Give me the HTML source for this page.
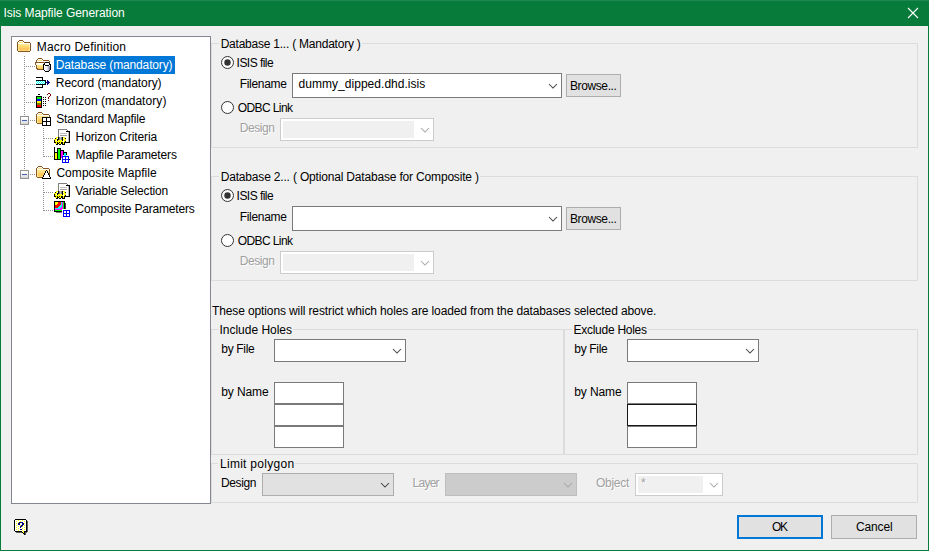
<!DOCTYPE html>
<html><head><meta charset="utf-8"><title>Isis Mapfile Generation</title>
<style>
html,body{margin:0;padding:0;background:#f0f0f0;}
body{width:929px;height:551px;overflow:hidden;font-family:"Liberation Sans",sans-serif;font-size:12px;color:#000;}
#win{position:absolute;left:0;top:0;width:929px;height:551px;background:#f0f0f0;overflow:hidden;}
#win *{box-sizing:border-box;}
.abs,.t,.gb,.cb,.btn,.tb,.rad,svg{position:absolute;}
.t{white-space:pre;line-height:14px;height:14px;font-size:12px;color:#000;}
.t.w{color:#fff;}
.t.d{color:#a0a0a0;text-shadow:1px 1px 0 #fff;}
.t.gl{background:#f0f0f0;padding:0 1px 0 2px;}
.title{left:0;top:0;width:929px;height:26px;background:#077b39;}
.edge{background:#077b39;}
.tree{left:11px;top:36px;width:200px;height:468px;background:#fff;border:1px solid #828790;}
.sel{left:54px;top:56px;width:121px;height:18px;background:#0078d7;}
.gb{border:1px solid #dcdcdc;}
.cb{background:#fff;border:1px solid #7a7a7a;}
.cb.dis{border-color:#cccccc;}
.cb.dis i{position:absolute;background:#f0f0f0;}
.cb.g{background:#e1e1e1;border-color:#adadad;}
.cb.gd{background:#cccccc;border-color:#bfbfbf;}
.btn{background:#e1e1e1;border:1px solid #adadad;}
.btn.def{border:2px solid #0078d7;}
.tb{background:#fff;border:1px solid #7a7a7a;}
.tb.f{border-color:#171717;}
.rad{width:13px;height:13px;}

</style></head>
<body>
<div id="win">
<div class="abs title"></div>
<div class="abs" style="left:0;top:0;width:929px;height:1px;background:#1f8850"></div>
<div class="abs edge" style="left:0;top:26px;width:1px;height:525px"></div>
<div class="abs edge" style="left:928px;top:26px;width:1px;height:525px"></div>
<div class="abs edge" style="left:0;top:550px;width:929px;height:1px"></div>
<svg style="left:907px;top:7px" width="12" height="12" viewBox="0 0 12 12"><path d="M1 1 L11 11 M11 1 L1 11" stroke="#fff" stroke-width="1.1" fill="none"/></svg>
<div class="abs tree"></div>
<div class="abs sel"></div>
<svg style="left:24px;top:56px" width="1" height="115" viewBox="0 0 1 115" shape-rendering="crispEdges"><path d="M0.5 0 V115" stroke="#919191" stroke-width="1" stroke-dasharray="1 1" fill="none"/></svg>
<svg style="left:26px;top:66px" width="9" height="1" viewBox="0 0 9 1" shape-rendering="crispEdges"><path d="M0 0.5 H9" stroke="#919191" stroke-width="1" stroke-dasharray="1 1" fill="none"/></svg>
<svg style="left:26px;top:84px" width="9" height="1" viewBox="0 0 9 1" shape-rendering="crispEdges"><path d="M0 0.5 H9" stroke="#919191" stroke-width="1" stroke-dasharray="1 1" fill="none"/></svg>
<svg style="left:26px;top:102px" width="9" height="1" viewBox="0 0 9 1" shape-rendering="crispEdges"><path d="M0 0.5 H9" stroke="#919191" stroke-width="1" stroke-dasharray="1 1" fill="none"/></svg>
<svg style="left:30px;top:120px" width="5" height="1" viewBox="0 0 5 1" shape-rendering="crispEdges"><path d="M0 0.5 H5" stroke="#919191" stroke-width="1" stroke-dasharray="1 1" fill="none"/></svg>
<svg style="left:30px;top:174px" width="5" height="1" viewBox="0 0 5 1" shape-rendering="crispEdges"><path d="M0 0.5 H5" stroke="#919191" stroke-width="1" stroke-dasharray="1 1" fill="none"/></svg>
<svg style="left:43px;top:128px" width="1" height="29" viewBox="0 0 1 29" shape-rendering="crispEdges"><path d="M0.5 0 V29" stroke="#919191" stroke-width="1" stroke-dasharray="1 1" fill="none"/></svg>
<svg style="left:43px;top:182px" width="1" height="29" viewBox="0 0 1 29" shape-rendering="crispEdges"><path d="M0.5 0 V29" stroke="#919191" stroke-width="1" stroke-dasharray="1 1" fill="none"/></svg>
<svg style="left:44px;top:138px" width="9" height="1" viewBox="0 0 9 1" shape-rendering="crispEdges"><path d="M0 0.5 H9" stroke="#919191" stroke-width="1" stroke-dasharray="1 1" fill="none"/></svg>
<svg style="left:44px;top:156px" width="9" height="1" viewBox="0 0 9 1" shape-rendering="crispEdges"><path d="M0 0.5 H9" stroke="#919191" stroke-width="1" stroke-dasharray="1 1" fill="none"/></svg>
<svg style="left:44px;top:192px" width="9" height="1" viewBox="0 0 9 1" shape-rendering="crispEdges"><path d="M0 0.5 H9" stroke="#919191" stroke-width="1" stroke-dasharray="1 1" fill="none"/></svg>
<svg style="left:44px;top:210px" width="9" height="1" viewBox="0 0 9 1" shape-rendering="crispEdges"><path d="M0 0.5 H9" stroke="#919191" stroke-width="1" stroke-dasharray="1 1" fill="none"/></svg>
<svg style="left:17px;top:40px" width="14" height="12" viewBox="0 0 14 12" shape-rendering="crispEdges"><rect x="2" y="0" width="4" height="1" fill="#8a5522"/><rect x="1" y="1" width="1" height="1" fill="#8a5522"/><rect x="2" y="1" width="4" height="1" fill="#fffdf0"/><rect x="6" y="1" width="1" height="1" fill="#8a5522"/><rect x="0" y="2" width="1" height="1" fill="#8a5522"/><rect x="1" y="2" width="1" height="1" fill="#fffdf0"/><rect x="2" y="2" width="4" height="1" fill="#ffe27a"/><rect x="6" y="2" width="1" height="1" fill="#fffdf0"/><rect x="7" y="2" width="6" height="1" fill="#8a5522"/><rect x="0" y="3" width="1" height="1" fill="#8a5522"/><rect x="1" y="3" width="12" height="1" fill="#fffdf0"/><rect x="13" y="3" width="1" height="1" fill="#8a5522"/><rect x="0" y="4" width="1" height="1" fill="#8a5522"/><rect x="1" y="4" width="1" height="1" fill="#ffe890"/><rect x="2" y="4" width="10" height="1" fill="#ffe68c"/><rect x="12" y="4" width="1" height="1" fill="#fffdf0"/><rect x="13" y="4" width="1" height="1" fill="#8a5522"/><rect x="0" y="5" width="1" height="1" fill="#8a5522"/><rect x="1" y="5" width="1" height="1" fill="#ffe890"/><rect x="2" y="5" width="10" height="1" fill="#ffdf7e"/><rect x="12" y="5" width="1" height="1" fill="#fff6d0"/><rect x="13" y="5" width="1" height="1" fill="#8a5522"/><rect x="0" y="6" width="1" height="1" fill="#8a5522"/><rect x="1" y="6" width="1" height="1" fill="#ffe890"/><rect x="2" y="6" width="10" height="1" fill="#ffd870"/><rect x="12" y="6" width="1" height="1" fill="#ffe890"/><rect x="13" y="6" width="1" height="1" fill="#8a5522"/><rect x="0" y="7" width="1" height="1" fill="#8a5522"/><rect x="1" y="7" width="1" height="1" fill="#ffe890"/><rect x="2" y="7" width="10" height="1" fill="#ffd168"/><rect x="12" y="7" width="1" height="1" fill="#ffe890"/><rect x="13" y="7" width="1" height="1" fill="#8a5522"/><rect x="0" y="8" width="1" height="1" fill="#8a5522"/><rect x="1" y="8" width="1" height="1" fill="#ffe890"/><rect x="2" y="8" width="10" height="1" fill="#fdc95e"/><rect x="12" y="8" width="1" height="1" fill="#ffe890"/><rect x="13" y="8" width="1" height="1" fill="#8a5522"/><rect x="0" y="9" width="1" height="1" fill="#8a5522"/><rect x="1" y="9" width="1" height="1" fill="#ffe890"/><rect x="2" y="9" width="10" height="1" fill="#fcc85c"/><rect x="12" y="9" width="1" height="1" fill="#ffe890"/><rect x="13" y="9" width="1" height="1" fill="#8a5522"/><rect x="0" y="10" width="1" height="1" fill="#8a5522"/><rect x="1" y="10" width="2" height="1" fill="#ffe890"/><rect x="3" y="10" width="8" height="1" fill="#ffd470"/><rect x="11" y="10" width="2" height="1" fill="#ffe890"/><rect x="13" y="10" width="1" height="1" fill="#8a5522"/><rect x="1" y="11" width="12" height="1" fill="#8a5522"/></svg>
<svg style="left:35px;top:58px" width="16" height="14" viewBox="0 0 16 14" shape-rendering="crispEdges"><rect x="3" y="0" width="4" height="1" fill="#8a5522"/><rect x="2" y="1" width="1" height="1" fill="#8a5522"/><rect x="3" y="1" width="4" height="1" fill="#fffdf0"/><rect x="7" y="1" width="1" height="1" fill="#8a5522"/><rect x="1" y="2" width="1" height="1" fill="#8a5522"/><rect x="2" y="2" width="1" height="1" fill="#fffdf0"/><rect x="3" y="2" width="4" height="1" fill="#ffe27a"/><rect x="7" y="2" width="1" height="1" fill="#fffdf0"/><rect x="8" y="2" width="6" height="1" fill="#8a5522"/><rect x="1" y="3" width="1" height="1" fill="#8a5522"/><rect x="2" y="3" width="12" height="1" fill="#fffdf0"/><rect x="14" y="3" width="1" height="1" fill="#8a5522"/><rect x="0" y="4" width="9" height="1" fill="#8a5522"/><rect x="9" y="4" width="1" height="1" fill="#b07a3c"/><rect x="10" y="4" width="4" height="1" fill="#000000"/><rect x="14" y="4" width="1" height="1" fill="#8a5522"/><rect x="0" y="5" width="1" height="1" fill="#8a5522"/><rect x="1" y="5" width="8" height="1" fill="#fffdf0"/><rect x="9" y="5" width="1" height="1" fill="#000000"/><rect x="10" y="5" width="4" height="1" fill="#ffffff"/><rect x="14" y="5" width="1" height="1" fill="#000000"/><rect x="0" y="6" width="1" height="1" fill="#8a5522"/><rect x="1" y="6" width="7" height="1" fill="#fffdf0"/><rect x="8" y="6" width="2" height="1" fill="#000000"/><rect x="10" y="6" width="4" height="1" fill="#ffffff"/><rect x="14" y="6" width="2" height="1" fill="#000000"/><rect x="1" y="7" width="1" height="1" fill="#8a5522"/><rect x="2" y="7" width="1" height="1" fill="#ffe27a"/><rect x="3" y="7" width="5" height="1" fill="#ffe68c"/><rect x="8" y="7" width="1" height="1" fill="#000000"/><rect x="9" y="7" width="1" height="1" fill="#ffffff"/><rect x="10" y="7" width="4" height="1" fill="#000000"/><rect x="14" y="7" width="1" height="1" fill="#ffffff"/><rect x="15" y="7" width="1" height="1" fill="#000000"/><rect x="1" y="8" width="1" height="1" fill="#8a5522"/><rect x="2" y="8" width="1" height="1" fill="#ffe890"/><rect x="3" y="8" width="5" height="1" fill="#ffdf7e"/><rect x="8" y="8" width="1" height="1" fill="#000000"/><rect x="9" y="8" width="1" height="1" fill="#ffffff"/><rect x="10" y="8" width="2" height="1" fill="#f4f4fa"/><rect x="12" y="8" width="1" height="1" fill="#d8d8e4"/><rect x="13" y="8" width="1" height="1" fill="#b4b4c6"/><rect x="14" y="8" width="1" height="1" fill="#8c8c98"/><rect x="15" y="8" width="1" height="1" fill="#000000"/><rect x="1" y="9" width="1" height="1" fill="#8a5522"/><rect x="2" y="9" width="1" height="1" fill="#ffe890"/><rect x="3" y="9" width="5" height="1" fill="#ffd168"/><rect x="8" y="9" width="1" height="1" fill="#000000"/><rect x="9" y="9" width="1" height="1" fill="#ffffff"/><rect x="10" y="9" width="2" height="1" fill="#f4f4fa"/><rect x="12" y="9" width="1" height="1" fill="#d8d8e4"/><rect x="13" y="9" width="1" height="1" fill="#b4b4c6"/><rect x="14" y="9" width="1" height="1" fill="#8c8c98"/><rect x="15" y="9" width="1" height="1" fill="#000000"/><rect x="1" y="10" width="2" height="1" fill="#8a5522"/><rect x="3" y="10" width="5" height="1" fill="#fdc95e"/><rect x="8" y="10" width="1" height="1" fill="#000000"/><rect x="9" y="10" width="1" height="1" fill="#ffffff"/><rect x="10" y="10" width="2" height="1" fill="#f4f4fa"/><rect x="12" y="10" width="1" height="1" fill="#d8d8e4"/><rect x="13" y="10" width="1" height="1" fill="#b4b4c6"/><rect x="14" y="10" width="1" height="1" fill="#8c8c98"/><rect x="15" y="10" width="1" height="1" fill="#000000"/><rect x="2" y="11" width="6" height="1" fill="#8a5522"/><rect x="8" y="11" width="1" height="1" fill="#000000"/><rect x="9" y="11" width="1" height="1" fill="#ffffff"/><rect x="10" y="11" width="2" height="1" fill="#f4f4fa"/><rect x="12" y="11" width="1" height="1" fill="#d8d8e4"/><rect x="13" y="11" width="1" height="1" fill="#b4b4c6"/><rect x="14" y="11" width="1" height="1" fill="#8c8c98"/><rect x="15" y="11" width="1" height="1" fill="#000000"/><rect x="9" y="12" width="1" height="1" fill="#000000"/><rect x="10" y="12" width="1" height="1" fill="#ffffff"/><rect x="11" y="12" width="1" height="1" fill="#f4f4fa"/><rect x="12" y="12" width="1" height="1" fill="#d8d8e4"/><rect x="13" y="12" width="1" height="1" fill="#b4b4c6"/><rect x="14" y="12" width="1" height="1" fill="#000000"/><rect x="10" y="13" width="4" height="1" fill="#000000"/></svg>
<svg style="left:36px;top:77px" width="14" height="11" viewBox="0 0 14 11" shape-rendering="crispEdges"><rect x="0" y="0" width="7" height="1" fill="#000000"/><rect x="6" y="1" width="1" height="1" fill="#000000"/><rect x="6" y="2" width="1" height="1" fill="#000000"/><rect x="0" y="3" width="10" height="1" fill="#000000"/><rect x="11" y="3" width="1" height="1" fill="#000080"/><rect x="0" y="4" width="1" height="1" fill="#00ffff"/><rect x="1" y="4" width="1" height="1" fill="#ffffff"/><rect x="2" y="4" width="1" height="1" fill="#00ffff"/><rect x="3" y="4" width="1" height="1" fill="#ffffff"/><rect x="4" y="4" width="1" height="1" fill="#00ffff"/><rect x="5" y="4" width="1" height="1" fill="#ffffff"/><rect x="6" y="4" width="1" height="1" fill="#00ffff"/><rect x="7" y="4" width="1" height="1" fill="#ffffff"/><rect x="8" y="4" width="1" height="1" fill="#00ffff"/><rect x="9" y="4" width="1" height="1" fill="#000000"/><rect x="11" y="4" width="2" height="1" fill="#000080"/><rect x="0" y="5" width="1" height="1" fill="#ffffff"/><rect x="1" y="5" width="1" height="1" fill="#00ffff"/><rect x="2" y="5" width="1" height="1" fill="#ffffff"/><rect x="3" y="5" width="1" height="1" fill="#00ffff"/><rect x="4" y="5" width="1" height="1" fill="#ffffff"/><rect x="5" y="5" width="1" height="1" fill="#00ffff"/><rect x="6" y="5" width="1" height="1" fill="#ffffff"/><rect x="7" y="5" width="1" height="1" fill="#00ffff"/><rect x="8" y="5" width="1" height="1" fill="#ffffff"/><rect x="9" y="5" width="1" height="1" fill="#000000"/><rect x="10" y="5" width="4" height="1" fill="#000080"/><rect x="0" y="6" width="1" height="1" fill="#00ffff"/><rect x="1" y="6" width="1" height="1" fill="#ffffff"/><rect x="2" y="6" width="1" height="1" fill="#00ffff"/><rect x="3" y="6" width="1" height="1" fill="#ffffff"/><rect x="4" y="6" width="1" height="1" fill="#00ffff"/><rect x="5" y="6" width="1" height="1" fill="#ffffff"/><rect x="6" y="6" width="1" height="1" fill="#00ffff"/><rect x="7" y="6" width="1" height="1" fill="#ffffff"/><rect x="8" y="6" width="1" height="1" fill="#00ffff"/><rect x="9" y="6" width="1" height="1" fill="#000000"/><rect x="11" y="6" width="2" height="1" fill="#000080"/><rect x="0" y="7" width="10" height="1" fill="#000000"/><rect x="11" y="7" width="1" height="1" fill="#000080"/><rect x="6" y="8" width="1" height="1" fill="#000000"/><rect x="6" y="9" width="1" height="1" fill="#000000"/><rect x="0" y="10" width="7" height="1" fill="#000000"/></svg>
<svg style="left:36px;top:93px" width="15" height="15" viewBox="0 0 15 15" shape-rendering="crispEdges"><rect x="12" y="0" width="2" height="1" fill="#800000"/><rect x="2" y="1" width="2" height="1" fill="#000000"/><rect x="11" y="1" width="1" height="1" fill="#800000"/><rect x="14" y="1" width="1" height="1" fill="#800000"/><rect x="14" y="2" width="1" height="1" fill="#800000"/><rect x="0" y="3" width="6" height="1" fill="#000000"/><rect x="13" y="3" width="1" height="1" fill="#800000"/><rect x="0" y="4" width="1" height="1" fill="#000000"/><rect x="1" y="4" width="4" height="1" fill="#00ff00"/><rect x="5" y="4" width="1" height="1" fill="#000000"/><rect x="7" y="4" width="1" height="1" fill="#000000"/><rect x="9" y="4" width="1" height="1" fill="#000000"/><rect x="12" y="4" width="1" height="1" fill="#800000"/><rect x="0" y="5" width="1" height="1" fill="#000000"/><rect x="1" y="5" width="4" height="1" fill="#00ff00"/><rect x="5" y="5" width="1" height="1" fill="#000000"/><rect x="12" y="5" width="1" height="1" fill="#800000"/><rect x="0" y="6" width="1" height="1" fill="#000000"/><rect x="1" y="6" width="4" height="1" fill="#0000ff"/><rect x="5" y="6" width="1" height="1" fill="#000000"/><rect x="7" y="6" width="1" height="1" fill="#000000"/><rect x="9" y="6" width="1" height="1" fill="#000000"/><rect x="0" y="7" width="1" height="1" fill="#000000"/><rect x="1" y="7" width="4" height="1" fill="#0000ff"/><rect x="5" y="7" width="1" height="1" fill="#000000"/><rect x="12" y="7" width="1" height="1" fill="#800000"/><rect x="0" y="8" width="1" height="1" fill="#000000"/><rect x="1" y="8" width="4" height="1" fill="#ffff00"/><rect x="5" y="8" width="1" height="1" fill="#000000"/><rect x="7" y="8" width="1" height="1" fill="#000000"/><rect x="9" y="8" width="1" height="1" fill="#000000"/><rect x="0" y="9" width="1" height="1" fill="#000000"/><rect x="1" y="9" width="4" height="1" fill="#ffff00"/><rect x="5" y="9" width="1" height="1" fill="#000000"/><rect x="0" y="10" width="1" height="1" fill="#000000"/><rect x="1" y="10" width="4" height="1" fill="#808000"/><rect x="5" y="10" width="1" height="1" fill="#000000"/><rect x="7" y="10" width="1" height="1" fill="#000000"/><rect x="9" y="10" width="1" height="1" fill="#000000"/><rect x="0" y="11" width="1" height="1" fill="#000000"/><rect x="1" y="11" width="4" height="1" fill="#808000"/><rect x="5" y="11" width="1" height="1" fill="#000000"/><rect x="0" y="12" width="1" height="1" fill="#000000"/><rect x="1" y="12" width="4" height="1" fill="#ff0000"/><rect x="5" y="12" width="1" height="1" fill="#000000"/><rect x="7" y="12" width="1" height="1" fill="#000000"/><rect x="9" y="12" width="1" height="1" fill="#000000"/><rect x="0" y="13" width="1" height="1" fill="#000000"/><rect x="1" y="13" width="4" height="1" fill="#ff0000"/><rect x="5" y="13" width="1" height="1" fill="#000000"/><rect x="0" y="14" width="6" height="1" fill="#000000"/></svg>
<svg style="left:20px;top:116px" width="9" height="9" viewBox="0 0 9 9" shape-rendering="crispEdges"><rect x="0" y="0" width="1" height="1" fill="#9a9a9a"/><rect x="1" y="0" width="7" height="1" fill="#919191"/><rect x="8" y="0" width="1" height="1" fill="#9a9a9a"/><rect x="0" y="1" width="1" height="1" fill="#919191"/><rect x="1" y="1" width="7" height="1" fill="#ffffff"/><rect x="8" y="1" width="1" height="1" fill="#919191"/><rect x="0" y="2" width="1" height="1" fill="#919191"/><rect x="1" y="2" width="7" height="1" fill="#ffffff"/><rect x="8" y="2" width="1" height="1" fill="#919191"/><rect x="0" y="3" width="1" height="1" fill="#919191"/><rect x="1" y="3" width="7" height="1" fill="#f2f2f2"/><rect x="8" y="3" width="1" height="1" fill="#919191"/><rect x="0" y="4" width="1" height="1" fill="#919191"/><rect x="1" y="4" width="1" height="1" fill="#f2f2f2"/><rect x="2" y="4" width="5" height="1" fill="#4464b8"/><rect x="7" y="4" width="1" height="1" fill="#f2f2f2"/><rect x="8" y="4" width="1" height="1" fill="#919191"/><rect x="0" y="5" width="1" height="1" fill="#919191"/><rect x="1" y="5" width="7" height="1" fill="#e4e4e4"/><rect x="8" y="5" width="1" height="1" fill="#919191"/><rect x="0" y="6" width="1" height="1" fill="#919191"/><rect x="1" y="6" width="7" height="1" fill="#e4e4e4"/><rect x="8" y="6" width="1" height="1" fill="#919191"/><rect x="0" y="7" width="1" height="1" fill="#919191"/><rect x="1" y="7" width="7" height="1" fill="#d8d8d8"/><rect x="8" y="7" width="1" height="1" fill="#919191"/><rect x="0" y="8" width="1" height="1" fill="#9a9a9a"/><rect x="1" y="8" width="7" height="1" fill="#919191"/><rect x="8" y="8" width="1" height="1" fill="#9a9a9a"/></svg>
<svg style="left:20px;top:170px" width="9" height="9" viewBox="0 0 9 9" shape-rendering="crispEdges"><rect x="0" y="0" width="1" height="1" fill="#9a9a9a"/><rect x="1" y="0" width="7" height="1" fill="#919191"/><rect x="8" y="0" width="1" height="1" fill="#9a9a9a"/><rect x="0" y="1" width="1" height="1" fill="#919191"/><rect x="1" y="1" width="7" height="1" fill="#ffffff"/><rect x="8" y="1" width="1" height="1" fill="#919191"/><rect x="0" y="2" width="1" height="1" fill="#919191"/><rect x="1" y="2" width="7" height="1" fill="#ffffff"/><rect x="8" y="2" width="1" height="1" fill="#919191"/><rect x="0" y="3" width="1" height="1" fill="#919191"/><rect x="1" y="3" width="7" height="1" fill="#f2f2f2"/><rect x="8" y="3" width="1" height="1" fill="#919191"/><rect x="0" y="4" width="1" height="1" fill="#919191"/><rect x="1" y="4" width="1" height="1" fill="#f2f2f2"/><rect x="2" y="4" width="5" height="1" fill="#4464b8"/><rect x="7" y="4" width="1" height="1" fill="#f2f2f2"/><rect x="8" y="4" width="1" height="1" fill="#919191"/><rect x="0" y="5" width="1" height="1" fill="#919191"/><rect x="1" y="5" width="7" height="1" fill="#e4e4e4"/><rect x="8" y="5" width="1" height="1" fill="#919191"/><rect x="0" y="6" width="1" height="1" fill="#919191"/><rect x="1" y="6" width="7" height="1" fill="#e4e4e4"/><rect x="8" y="6" width="1" height="1" fill="#919191"/><rect x="0" y="7" width="1" height="1" fill="#919191"/><rect x="1" y="7" width="7" height="1" fill="#d8d8d8"/><rect x="8" y="7" width="1" height="1" fill="#919191"/><rect x="0" y="8" width="1" height="1" fill="#9a9a9a"/><rect x="1" y="8" width="7" height="1" fill="#919191"/><rect x="8" y="8" width="1" height="1" fill="#9a9a9a"/></svg>
<svg style="left:36px;top:112px" width="14" height="12" viewBox="0 0 14 12" shape-rendering="crispEdges"><rect x="2" y="0" width="4" height="1" fill="#8a5522"/><rect x="1" y="1" width="1" height="1" fill="#8a5522"/><rect x="2" y="1" width="4" height="1" fill="#fffdf0"/><rect x="6" y="1" width="1" height="1" fill="#8a5522"/><rect x="0" y="2" width="1" height="1" fill="#8a5522"/><rect x="1" y="2" width="1" height="1" fill="#fffdf0"/><rect x="2" y="2" width="4" height="1" fill="#ffe27a"/><rect x="6" y="2" width="1" height="1" fill="#fffdf0"/><rect x="7" y="2" width="6" height="1" fill="#8a5522"/><rect x="0" y="3" width="1" height="1" fill="#8a5522"/><rect x="1" y="3" width="12" height="1" fill="#fffdf0"/><rect x="13" y="3" width="1" height="1" fill="#8a5522"/><rect x="0" y="4" width="1" height="1" fill="#8a5522"/><rect x="1" y="4" width="1" height="1" fill="#ffe890"/><rect x="2" y="4" width="10" height="1" fill="#ffe68c"/><rect x="12" y="4" width="1" height="1" fill="#fffdf0"/><rect x="13" y="4" width="1" height="1" fill="#8a5522"/><rect x="0" y="5" width="1" height="1" fill="#8a5522"/><rect x="1" y="5" width="1" height="1" fill="#ffe890"/><rect x="2" y="5" width="10" height="1" fill="#ffdf7e"/><rect x="12" y="5" width="1" height="1" fill="#fff6d0"/><rect x="13" y="5" width="1" height="1" fill="#8a5522"/><rect x="0" y="6" width="1" height="1" fill="#8a5522"/><rect x="1" y="6" width="1" height="1" fill="#ffe890"/><rect x="2" y="6" width="10" height="1" fill="#ffd870"/><rect x="12" y="6" width="1" height="1" fill="#ffe890"/><rect x="13" y="6" width="1" height="1" fill="#8a5522"/><rect x="0" y="7" width="1" height="1" fill="#8a5522"/><rect x="1" y="7" width="1" height="1" fill="#ffe890"/><rect x="2" y="7" width="10" height="1" fill="#ffd168"/><rect x="12" y="7" width="1" height="1" fill="#ffe890"/><rect x="13" y="7" width="1" height="1" fill="#8a5522"/><rect x="0" y="8" width="1" height="1" fill="#8a5522"/><rect x="1" y="8" width="1" height="1" fill="#ffe890"/><rect x="2" y="8" width="10" height="1" fill="#fdc95e"/><rect x="12" y="8" width="1" height="1" fill="#ffe890"/><rect x="13" y="8" width="1" height="1" fill="#8a5522"/><rect x="0" y="9" width="1" height="1" fill="#8a5522"/><rect x="1" y="9" width="1" height="1" fill="#ffe890"/><rect x="2" y="9" width="10" height="1" fill="#fcc85c"/><rect x="12" y="9" width="1" height="1" fill="#ffe890"/><rect x="13" y="9" width="1" height="1" fill="#8a5522"/><rect x="0" y="10" width="1" height="1" fill="#8a5522"/><rect x="1" y="10" width="2" height="1" fill="#ffe890"/><rect x="3" y="10" width="8" height="1" fill="#ffd470"/><rect x="11" y="10" width="2" height="1" fill="#ffe890"/><rect x="13" y="10" width="1" height="1" fill="#8a5522"/><rect x="1" y="11" width="12" height="1" fill="#8a5522"/></svg>
<svg style="left:42px;top:117px" width="9" height="9" viewBox="0 0 9 9" shape-rendering="crispEdges"><rect x="0" y="0" width="9" height="1" fill="#000000"/><rect x="0" y="1" width="1" height="1" fill="#000000"/><rect x="1" y="1" width="3" height="1" fill="#ffffff"/><rect x="4" y="1" width="1" height="1" fill="#000000"/><rect x="5" y="1" width="3" height="1" fill="#ffffff"/><rect x="8" y="1" width="1" height="1" fill="#000000"/><rect x="0" y="2" width="1" height="1" fill="#000000"/><rect x="1" y="2" width="3" height="1" fill="#ffffff"/><rect x="4" y="2" width="1" height="1" fill="#000000"/><rect x="5" y="2" width="3" height="1" fill="#ffffff"/><rect x="8" y="2" width="1" height="1" fill="#000000"/><rect x="0" y="3" width="1" height="1" fill="#000000"/><rect x="1" y="3" width="3" height="1" fill="#ffffff"/><rect x="4" y="3" width="1" height="1" fill="#000000"/><rect x="5" y="3" width="3" height="1" fill="#ffffff"/><rect x="8" y="3" width="1" height="1" fill="#000000"/><rect x="0" y="4" width="9" height="1" fill="#000000"/><rect x="0" y="5" width="1" height="1" fill="#000000"/><rect x="1" y="5" width="3" height="1" fill="#ffffff"/><rect x="4" y="5" width="1" height="1" fill="#000000"/><rect x="5" y="5" width="3" height="1" fill="#ffffff"/><rect x="8" y="5" width="1" height="1" fill="#000000"/><rect x="0" y="6" width="1" height="1" fill="#000000"/><rect x="1" y="6" width="3" height="1" fill="#ffffff"/><rect x="4" y="6" width="1" height="1" fill="#000000"/><rect x="5" y="6" width="3" height="1" fill="#ffffff"/><rect x="8" y="6" width="1" height="1" fill="#000000"/><rect x="0" y="7" width="1" height="1" fill="#000000"/><rect x="1" y="7" width="3" height="1" fill="#ffffff"/><rect x="4" y="7" width="1" height="1" fill="#000000"/><rect x="5" y="7" width="3" height="1" fill="#ffffff"/><rect x="8" y="7" width="1" height="1" fill="#000000"/><rect x="0" y="8" width="9" height="1" fill="#000000"/></svg>
<svg style="left:36px;top:166px" width="14" height="12" viewBox="0 0 14 12" shape-rendering="crispEdges"><rect x="2" y="0" width="4" height="1" fill="#8a5522"/><rect x="1" y="1" width="1" height="1" fill="#8a5522"/><rect x="2" y="1" width="4" height="1" fill="#fffdf0"/><rect x="6" y="1" width="1" height="1" fill="#8a5522"/><rect x="0" y="2" width="1" height="1" fill="#8a5522"/><rect x="1" y="2" width="1" height="1" fill="#fffdf0"/><rect x="2" y="2" width="4" height="1" fill="#ffe27a"/><rect x="6" y="2" width="1" height="1" fill="#fffdf0"/><rect x="7" y="2" width="6" height="1" fill="#8a5522"/><rect x="0" y="3" width="1" height="1" fill="#8a5522"/><rect x="1" y="3" width="12" height="1" fill="#fffdf0"/><rect x="13" y="3" width="1" height="1" fill="#8a5522"/><rect x="0" y="4" width="1" height="1" fill="#8a5522"/><rect x="1" y="4" width="1" height="1" fill="#ffe890"/><rect x="2" y="4" width="10" height="1" fill="#ffe68c"/><rect x="12" y="4" width="1" height="1" fill="#fffdf0"/><rect x="13" y="4" width="1" height="1" fill="#8a5522"/><rect x="0" y="5" width="1" height="1" fill="#8a5522"/><rect x="1" y="5" width="1" height="1" fill="#ffe890"/><rect x="2" y="5" width="10" height="1" fill="#ffdf7e"/><rect x="12" y="5" width="1" height="1" fill="#fff6d0"/><rect x="13" y="5" width="1" height="1" fill="#8a5522"/><rect x="0" y="6" width="1" height="1" fill="#8a5522"/><rect x="1" y="6" width="1" height="1" fill="#ffe890"/><rect x="2" y="6" width="10" height="1" fill="#ffd870"/><rect x="12" y="6" width="1" height="1" fill="#ffe890"/><rect x="13" y="6" width="1" height="1" fill="#8a5522"/><rect x="0" y="7" width="1" height="1" fill="#8a5522"/><rect x="1" y="7" width="1" height="1" fill="#ffe890"/><rect x="2" y="7" width="10" height="1" fill="#ffd168"/><rect x="12" y="7" width="1" height="1" fill="#ffe890"/><rect x="13" y="7" width="1" height="1" fill="#8a5522"/><rect x="0" y="8" width="1" height="1" fill="#8a5522"/><rect x="1" y="8" width="1" height="1" fill="#ffe890"/><rect x="2" y="8" width="10" height="1" fill="#fdc95e"/><rect x="12" y="8" width="1" height="1" fill="#ffe890"/><rect x="13" y="8" width="1" height="1" fill="#8a5522"/><rect x="0" y="9" width="1" height="1" fill="#8a5522"/><rect x="1" y="9" width="1" height="1" fill="#ffe890"/><rect x="2" y="9" width="10" height="1" fill="#fcc85c"/><rect x="12" y="9" width="1" height="1" fill="#ffe890"/><rect x="13" y="9" width="1" height="1" fill="#8a5522"/><rect x="0" y="10" width="1" height="1" fill="#8a5522"/><rect x="1" y="10" width="2" height="1" fill="#ffe890"/><rect x="3" y="10" width="8" height="1" fill="#ffd470"/><rect x="11" y="10" width="2" height="1" fill="#ffe890"/><rect x="13" y="10" width="1" height="1" fill="#8a5522"/><rect x="1" y="11" width="12" height="1" fill="#8a5522"/></svg>
<svg style="left:42px;top:170px" width="9" height="9" viewBox="0 0 9 9" shape-rendering="crispEdges"><rect x="4" y="0" width="1" height="1" fill="#000000"/><rect x="3" y="1" width="1" height="1" fill="#000000"/><rect x="4" y="1" width="1" height="1" fill="#ffffff"/><rect x="5" y="1" width="1" height="1" fill="#000000"/><rect x="3" y="2" width="1" height="1" fill="#000000"/><rect x="4" y="2" width="1" height="1" fill="#ffffff"/><rect x="5" y="2" width="1" height="1" fill="#000000"/><rect x="2" y="3" width="1" height="1" fill="#000000"/><rect x="3" y="3" width="3" height="1" fill="#ffffff"/><rect x="6" y="3" width="1" height="1" fill="#000000"/><rect x="2" y="4" width="1" height="1" fill="#000000"/><rect x="3" y="4" width="3" height="1" fill="#ffffff"/><rect x="6" y="4" width="1" height="1" fill="#000000"/><rect x="1" y="5" width="1" height="1" fill="#000000"/><rect x="2" y="5" width="5" height="1" fill="#ffffff"/><rect x="7" y="5" width="1" height="1" fill="#000000"/><rect x="1" y="6" width="1" height="1" fill="#000000"/><rect x="2" y="6" width="5" height="1" fill="#ffffff"/><rect x="7" y="6" width="1" height="1" fill="#000000"/><rect x="0" y="7" width="1" height="1" fill="#000000"/><rect x="1" y="7" width="7" height="1" fill="#ffffff"/><rect x="8" y="7" width="1" height="1" fill="#000000"/><rect x="0" y="8" width="9" height="1" fill="#000000"/></svg>
<svg style="left:54px;top:129px" width="16" height="16" viewBox="0 0 16 16" shape-rendering="crispEdges"><rect x="4" y="0" width="9" height="1" fill="#808080"/><rect x="4" y="1" width="1" height="1" fill="#808080"/><rect x="5" y="1" width="8" height="1" fill="#ffffff"/><rect x="13" y="1" width="1" height="1" fill="#808080"/><rect x="4" y="2" width="1" height="1" fill="#808080"/><rect x="5" y="2" width="7" height="1" fill="#ffffff"/><rect x="12" y="2" width="4" height="1" fill="#000000"/><rect x="4" y="3" width="1" height="1" fill="#808080"/><rect x="5" y="3" width="9" height="1" fill="#ffffff"/><rect x="14" y="3" width="1" height="1" fill="#c0c0c0"/><rect x="15" y="3" width="1" height="1" fill="#000000"/><rect x="4" y="4" width="1" height="1" fill="#808080"/><rect x="5" y="4" width="1" height="1" fill="#ffffff"/><rect x="6" y="4" width="7" height="1" fill="#c0c0c0"/><rect x="13" y="4" width="1" height="1" fill="#ffffff"/><rect x="14" y="4" width="1" height="1" fill="#c0c0c0"/><rect x="15" y="4" width="1" height="1" fill="#000000"/><rect x="4" y="5" width="1" height="1" fill="#808080"/><rect x="5" y="5" width="9" height="1" fill="#ffffff"/><rect x="14" y="5" width="1" height="1" fill="#c0c0c0"/><rect x="15" y="5" width="1" height="1" fill="#000000"/><rect x="4" y="6" width="1" height="1" fill="#808080"/><rect x="5" y="6" width="1" height="1" fill="#ffffff"/><rect x="6" y="6" width="7" height="1" fill="#a0a0a0"/><rect x="13" y="6" width="1" height="1" fill="#ffffff"/><rect x="14" y="6" width="1" height="1" fill="#c0c0c0"/><rect x="15" y="6" width="1" height="1" fill="#000000"/><rect x="4" y="7" width="1" height="1" fill="#808080"/><rect x="5" y="7" width="9" height="1" fill="#ffffff"/><rect x="14" y="7" width="1" height="1" fill="#c0c0c0"/><rect x="15" y="7" width="1" height="1" fill="#000000"/><rect x="2" y="8" width="2" height="1" fill="#ffff00"/><rect x="4" y="8" width="1" height="1" fill="#000000"/><rect x="5" y="8" width="1" height="1" fill="#808080"/><rect x="6" y="8" width="1" height="1" fill="#c0c0c0"/><rect x="7" y="8" width="1" height="1" fill="#808080"/><rect x="8" y="8" width="1" height="1" fill="#000000"/><rect x="9" y="8" width="2" height="1" fill="#ffff00"/><rect x="11" y="8" width="3" height="1" fill="#ffffff"/><rect x="14" y="8" width="1" height="1" fill="#c0c0c0"/><rect x="15" y="8" width="1" height="1" fill="#000000"/><rect x="1" y="9" width="1" height="1" fill="#000000"/><rect x="2" y="9" width="1" height="1" fill="#ffff00"/><rect x="3" y="9" width="1" height="1" fill="#ffffff"/><rect x="4" y="9" width="1" height="1" fill="#000000"/><rect x="5" y="9" width="1" height="1" fill="#808080"/><rect x="6" y="9" width="1" height="1" fill="#c0c0c0"/><rect x="7" y="9" width="1" height="1" fill="#808080"/><rect x="8" y="9" width="1" height="1" fill="#000000"/><rect x="9" y="9" width="1" height="1" fill="#ffffff"/><rect x="10" y="9" width="1" height="1" fill="#ffff00"/><rect x="11" y="9" width="1" height="1" fill="#000000"/><rect x="12" y="9" width="2" height="1" fill="#ffffff"/><rect x="14" y="9" width="1" height="1" fill="#c0c0c0"/><rect x="15" y="9" width="1" height="1" fill="#000000"/><rect x="0" y="10" width="3" height="1" fill="#ffff00"/><rect x="3" y="10" width="2" height="1" fill="#000000"/><rect x="5" y="10" width="1" height="1" fill="#808080"/><rect x="6" y="10" width="1" height="1" fill="#c0c0c0"/><rect x="7" y="10" width="1" height="1" fill="#808080"/><rect x="8" y="10" width="1" height="1" fill="#000000"/><rect x="9" y="10" width="3" height="1" fill="#ffff00"/><rect x="12" y="10" width="2" height="1" fill="#ffffff"/><rect x="14" y="10" width="1" height="1" fill="#c0c0c0"/><rect x="15" y="10" width="1" height="1" fill="#000000"/><rect x="0" y="11" width="1" height="1" fill="#000000"/><rect x="1" y="11" width="1" height="1" fill="#ffff00"/><rect x="2" y="11" width="1" height="1" fill="#ffffff"/><rect x="3" y="11" width="1" height="1" fill="#000000"/><rect x="4" y="11" width="4" height="1" fill="#ffff00"/><rect x="8" y="11" width="1" height="1" fill="#000000"/><rect x="9" y="11" width="1" height="1" fill="#ffffff"/><rect x="10" y="11" width="2" height="1" fill="#ffff00"/><rect x="12" y="11" width="2" height="1" fill="#ffffff"/><rect x="14" y="11" width="1" height="1" fill="#c0c0c0"/><rect x="15" y="11" width="1" height="1" fill="#000000"/><rect x="0" y="12" width="1" height="1" fill="#000000"/><rect x="1" y="12" width="8" height="1" fill="#ffff00"/><rect x="9" y="12" width="1" height="1" fill="#ffffff"/><rect x="10" y="12" width="1" height="1" fill="#ffff00"/><rect x="11" y="12" width="1" height="1" fill="#000000"/><rect x="12" y="12" width="2" height="1" fill="#ffffff"/><rect x="14" y="12" width="1" height="1" fill="#c0c0c0"/><rect x="15" y="12" width="1" height="1" fill="#000000"/><rect x="0" y="13" width="2" height="1" fill="#000000"/><rect x="2" y="13" width="1" height="1" fill="#ffff00"/><rect x="3" y="13" width="1" height="1" fill="#000000"/><rect x="4" y="13" width="1" height="1" fill="#ffff00"/><rect x="5" y="13" width="1" height="1" fill="#000000"/><rect x="6" y="13" width="1" height="1" fill="#ffff00"/><rect x="7" y="13" width="2" height="1" fill="#000000"/><rect x="9" y="13" width="1" height="1" fill="#ffff00"/><rect x="10" y="13" width="6" height="1" fill="#000000"/><rect x="1" y="14" width="2" height="1" fill="#ffff00"/><rect x="3" y="14" width="2" height="1" fill="#000000"/><rect x="5" y="14" width="2" height="1" fill="#ffff00"/><rect x="7" y="14" width="2" height="1" fill="#000000"/><rect x="9" y="14" width="1" height="1" fill="#ffff00"/><rect x="10" y="14" width="1" height="1" fill="#000000"/><rect x="2" y="15" width="2" height="1" fill="#000000"/><rect x="5" y="15" width="2" height="1" fill="#000000"/><rect x="8" y="15" width="3" height="1" fill="#000000"/></svg>
<svg style="left:54px;top:183px" width="16" height="16" viewBox="0 0 16 16" shape-rendering="crispEdges"><rect x="4" y="0" width="9" height="1" fill="#808080"/><rect x="4" y="1" width="1" height="1" fill="#808080"/><rect x="5" y="1" width="8" height="1" fill="#ffffff"/><rect x="13" y="1" width="1" height="1" fill="#808080"/><rect x="4" y="2" width="1" height="1" fill="#808080"/><rect x="5" y="2" width="7" height="1" fill="#ffffff"/><rect x="12" y="2" width="4" height="1" fill="#000000"/><rect x="4" y="3" width="1" height="1" fill="#808080"/><rect x="5" y="3" width="9" height="1" fill="#ffffff"/><rect x="14" y="3" width="1" height="1" fill="#c0c0c0"/><rect x="15" y="3" width="1" height="1" fill="#000000"/><rect x="4" y="4" width="1" height="1" fill="#808080"/><rect x="5" y="4" width="1" height="1" fill="#ffffff"/><rect x="6" y="4" width="7" height="1" fill="#c0c0c0"/><rect x="13" y="4" width="1" height="1" fill="#ffffff"/><rect x="14" y="4" width="1" height="1" fill="#c0c0c0"/><rect x="15" y="4" width="1" height="1" fill="#000000"/><rect x="4" y="5" width="1" height="1" fill="#808080"/><rect x="5" y="5" width="9" height="1" fill="#ffffff"/><rect x="14" y="5" width="1" height="1" fill="#c0c0c0"/><rect x="15" y="5" width="1" height="1" fill="#000000"/><rect x="4" y="6" width="1" height="1" fill="#808080"/><rect x="5" y="6" width="1" height="1" fill="#ffffff"/><rect x="6" y="6" width="7" height="1" fill="#a0a0a0"/><rect x="13" y="6" width="1" height="1" fill="#ffffff"/><rect x="14" y="6" width="1" height="1" fill="#c0c0c0"/><rect x="15" y="6" width="1" height="1" fill="#000000"/><rect x="4" y="7" width="1" height="1" fill="#808080"/><rect x="5" y="7" width="9" height="1" fill="#ffffff"/><rect x="14" y="7" width="1" height="1" fill="#c0c0c0"/><rect x="15" y="7" width="1" height="1" fill="#000000"/><rect x="2" y="8" width="2" height="1" fill="#ffff00"/><rect x="4" y="8" width="1" height="1" fill="#000000"/><rect x="5" y="8" width="1" height="1" fill="#808080"/><rect x="6" y="8" width="1" height="1" fill="#c0c0c0"/><rect x="7" y="8" width="1" height="1" fill="#808080"/><rect x="8" y="8" width="1" height="1" fill="#000000"/><rect x="9" y="8" width="2" height="1" fill="#ffff00"/><rect x="11" y="8" width="3" height="1" fill="#ffffff"/><rect x="14" y="8" width="1" height="1" fill="#c0c0c0"/><rect x="15" y="8" width="1" height="1" fill="#000000"/><rect x="1" y="9" width="1" height="1" fill="#000000"/><rect x="2" y="9" width="1" height="1" fill="#ffff00"/><rect x="3" y="9" width="1" height="1" fill="#ffffff"/><rect x="4" y="9" width="1" height="1" fill="#000000"/><rect x="5" y="9" width="1" height="1" fill="#808080"/><rect x="6" y="9" width="1" height="1" fill="#c0c0c0"/><rect x="7" y="9" width="1" height="1" fill="#808080"/><rect x="8" y="9" width="1" height="1" fill="#000000"/><rect x="9" y="9" width="1" height="1" fill="#ffffff"/><rect x="10" y="9" width="1" height="1" fill="#ffff00"/><rect x="11" y="9" width="1" height="1" fill="#000000"/><rect x="12" y="9" width="2" height="1" fill="#ffffff"/><rect x="14" y="9" width="1" height="1" fill="#c0c0c0"/><rect x="15" y="9" width="1" height="1" fill="#000000"/><rect x="0" y="10" width="3" height="1" fill="#ffff00"/><rect x="3" y="10" width="2" height="1" fill="#000000"/><rect x="5" y="10" width="1" height="1" fill="#808080"/><rect x="6" y="10" width="1" height="1" fill="#c0c0c0"/><rect x="7" y="10" width="1" height="1" fill="#808080"/><rect x="8" y="10" width="1" height="1" fill="#000000"/><rect x="9" y="10" width="3" height="1" fill="#ffff00"/><rect x="12" y="10" width="2" height="1" fill="#ffffff"/><rect x="14" y="10" width="1" height="1" fill="#c0c0c0"/><rect x="15" y="10" width="1" height="1" fill="#000000"/><rect x="0" y="11" width="1" height="1" fill="#000000"/><rect x="1" y="11" width="1" height="1" fill="#ffff00"/><rect x="2" y="11" width="1" height="1" fill="#ffffff"/><rect x="3" y="11" width="1" height="1" fill="#000000"/><rect x="4" y="11" width="4" height="1" fill="#ffff00"/><rect x="8" y="11" width="1" height="1" fill="#000000"/><rect x="9" y="11" width="1" height="1" fill="#ffffff"/><rect x="10" y="11" width="2" height="1" fill="#ffff00"/><rect x="12" y="11" width="2" height="1" fill="#ffffff"/><rect x="14" y="11" width="1" height="1" fill="#c0c0c0"/><rect x="15" y="11" width="1" height="1" fill="#000000"/><rect x="0" y="12" width="1" height="1" fill="#000000"/><rect x="1" y="12" width="8" height="1" fill="#ffff00"/><rect x="9" y="12" width="1" height="1" fill="#ffffff"/><rect x="10" y="12" width="1" height="1" fill="#ffff00"/><rect x="11" y="12" width="1" height="1" fill="#000000"/><rect x="12" y="12" width="2" height="1" fill="#ffffff"/><rect x="14" y="12" width="1" height="1" fill="#c0c0c0"/><rect x="15" y="12" width="1" height="1" fill="#000000"/><rect x="0" y="13" width="2" height="1" fill="#000000"/><rect x="2" y="13" width="1" height="1" fill="#ffff00"/><rect x="3" y="13" width="1" height="1" fill="#000000"/><rect x="4" y="13" width="1" height="1" fill="#ffff00"/><rect x="5" y="13" width="1" height="1" fill="#000000"/><rect x="6" y="13" width="1" height="1" fill="#ffff00"/><rect x="7" y="13" width="2" height="1" fill="#000000"/><rect x="9" y="13" width="1" height="1" fill="#ffff00"/><rect x="10" y="13" width="6" height="1" fill="#000000"/><rect x="1" y="14" width="2" height="1" fill="#ffff00"/><rect x="3" y="14" width="2" height="1" fill="#000000"/><rect x="5" y="14" width="2" height="1" fill="#ffff00"/><rect x="7" y="14" width="2" height="1" fill="#000000"/><rect x="9" y="14" width="1" height="1" fill="#ffff00"/><rect x="10" y="14" width="1" height="1" fill="#000000"/><rect x="2" y="15" width="2" height="1" fill="#000000"/><rect x="5" y="15" width="2" height="1" fill="#000000"/><rect x="8" y="15" width="3" height="1" fill="#000000"/></svg>
<svg style="left:54px;top:147px" width="16" height="13" viewBox="0 0 16 13" shape-rendering="crispEdges"><rect x="0" y="0" width="1" height="1" fill="#000000"/><rect x="0" y="1" width="1" height="1" fill="#000000"/><rect x="3" y="1" width="4" height="1" fill="#000000"/><rect x="0" y="2" width="1" height="1" fill="#000000"/><rect x="3" y="2" width="1" height="1" fill="#000000"/><rect x="4" y="2" width="2" height="1" fill="#00ff00"/><rect x="6" y="2" width="1" height="1" fill="#000000"/><rect x="0" y="3" width="1" height="1" fill="#000000"/><rect x="3" y="3" width="1" height="1" fill="#000000"/><rect x="4" y="3" width="2" height="1" fill="#00ff00"/><rect x="6" y="3" width="4" height="1" fill="#000000"/><rect x="0" y="4" width="1" height="1" fill="#000000"/><rect x="3" y="4" width="1" height="1" fill="#000000"/><rect x="4" y="4" width="2" height="1" fill="#00ff00"/><rect x="6" y="4" width="1" height="1" fill="#000000"/><rect x="7" y="4" width="2" height="1" fill="#ff00ff"/><rect x="9" y="4" width="1" height="1" fill="#000000"/><rect x="0" y="5" width="4" height="1" fill="#000000"/><rect x="4" y="5" width="2" height="1" fill="#00ff00"/><rect x="6" y="5" width="1" height="1" fill="#000000"/><rect x="7" y="5" width="2" height="1" fill="#ff00ff"/><rect x="9" y="5" width="4" height="1" fill="#000000"/><rect x="0" y="6" width="1" height="1" fill="#000000"/><rect x="1" y="6" width="2" height="1" fill="#ffff00"/><rect x="3" y="6" width="1" height="1" fill="#000000"/><rect x="4" y="6" width="2" height="1" fill="#00ff00"/><rect x="6" y="6" width="1" height="1" fill="#000000"/><rect x="7" y="6" width="2" height="1" fill="#ff00ff"/><rect x="9" y="6" width="1" height="1" fill="#000000"/><rect x="10" y="6" width="2" height="1" fill="#00ffff"/><rect x="12" y="6" width="1" height="1" fill="#000000"/><rect x="0" y="7" width="1" height="1" fill="#000000"/><rect x="1" y="7" width="2" height="1" fill="#ffff00"/><rect x="3" y="7" width="1" height="1" fill="#000000"/><rect x="4" y="7" width="2" height="1" fill="#00ff00"/><rect x="6" y="7" width="1" height="1" fill="#000000"/><rect x="7" y="7" width="2" height="1" fill="#ff00ff"/><rect x="9" y="7" width="1" height="1" fill="#000000"/><rect x="10" y="7" width="2" height="1" fill="#00ffff"/><rect x="12" y="7" width="1" height="1" fill="#000000"/><rect x="0" y="8" width="1" height="1" fill="#000000"/><rect x="1" y="8" width="2" height="1" fill="#ffff00"/><rect x="3" y="8" width="1" height="1" fill="#000000"/><rect x="4" y="8" width="2" height="1" fill="#00ff00"/><rect x="6" y="8" width="1" height="1" fill="#000000"/><rect x="7" y="8" width="2" height="1" fill="#ff00ff"/><rect x="10" y="8" width="2" height="1" fill="#00ffff"/><rect x="0" y="9" width="1" height="1" fill="#000000"/><rect x="1" y="9" width="2" height="1" fill="#ffff00"/><rect x="3" y="9" width="1" height="1" fill="#000000"/><rect x="4" y="9" width="2" height="1" fill="#00ff00"/><rect x="6" y="9" width="1" height="1" fill="#000000"/><rect x="7" y="9" width="1" height="1" fill="#ff00ff"/><rect x="0" y="10" width="1" height="1" fill="#000000"/><rect x="1" y="10" width="2" height="1" fill="#ffff00"/><rect x="3" y="10" width="1" height="1" fill="#000000"/><rect x="4" y="10" width="2" height="1" fill="#00ff00"/><rect x="6" y="10" width="1" height="1" fill="#000000"/><rect x="7" y="10" width="1" height="1" fill="#ff00ff"/><rect x="0" y="11" width="1" height="1" fill="#000000"/><rect x="1" y="11" width="2" height="1" fill="#ffff00"/><rect x="3" y="11" width="1" height="1" fill="#000000"/><rect x="4" y="11" width="2" height="1" fill="#00ff00"/><rect x="6" y="11" width="1" height="1" fill="#000000"/><rect x="0" y="12" width="7" height="1" fill="#000000"/><rect x="15" y="12" width="1" height="1" fill="#000000"/></svg>
<svg style="left:62px;top:156px" width="7" height="7" viewBox="0 0 7 7" shape-rendering="crispEdges"><rect x="0" y="0" width="7" height="1" fill="#0000ff"/><rect x="0" y="1" width="1" height="1" fill="#0000ff"/><rect x="1" y="1" width="2" height="1" fill="#ffffff"/><rect x="3" y="1" width="1" height="1" fill="#0000ff"/><rect x="4" y="1" width="2" height="1" fill="#ffffff"/><rect x="6" y="1" width="1" height="1" fill="#0000ff"/><rect x="0" y="2" width="1" height="1" fill="#0000ff"/><rect x="1" y="2" width="2" height="1" fill="#ffffff"/><rect x="3" y="2" width="1" height="1" fill="#0000ff"/><rect x="4" y="2" width="2" height="1" fill="#ffffff"/><rect x="6" y="2" width="1" height="1" fill="#0000ff"/><rect x="0" y="3" width="7" height="1" fill="#0000ff"/><rect x="0" y="4" width="1" height="1" fill="#0000ff"/><rect x="1" y="4" width="2" height="1" fill="#ffffff"/><rect x="3" y="4" width="1" height="1" fill="#0000ff"/><rect x="4" y="4" width="2" height="1" fill="#ffffff"/><rect x="6" y="4" width="1" height="1" fill="#0000ff"/><rect x="0" y="5" width="1" height="1" fill="#0000ff"/><rect x="1" y="5" width="2" height="1" fill="#ffffff"/><rect x="3" y="5" width="1" height="1" fill="#0000ff"/><rect x="4" y="5" width="2" height="1" fill="#ffffff"/><rect x="6" y="5" width="1" height="1" fill="#0000ff"/><rect x="0" y="6" width="7" height="1" fill="#0000ff"/></svg>
<svg style="left:54px;top:201px" width="12" height="12" viewBox="0 0 12 12" shape-rendering="crispEdges"><rect x="0" y="0" width="11" height="1" fill="#000000"/><rect x="0" y="1" width="1" height="1" fill="#000000"/><rect x="1" y="1" width="3" height="1" fill="#ffff00"/><rect x="4" y="1" width="3" height="1" fill="#ff0000"/><rect x="7" y="1" width="1" height="1" fill="#00ffff"/><rect x="8" y="1" width="1" height="1" fill="#ff00ff"/><rect x="9" y="1" width="1" height="1" fill="#00ff00"/><rect x="10" y="1" width="1" height="1" fill="#000000"/><rect x="0" y="2" width="1" height="1" fill="#000000"/><rect x="1" y="2" width="3" height="1" fill="#ffff00"/><rect x="4" y="2" width="3" height="1" fill="#ff0000"/><rect x="7" y="2" width="1" height="1" fill="#00ffff"/><rect x="8" y="2" width="1" height="1" fill="#ff00ff"/><rect x="9" y="2" width="1" height="1" fill="#00ff00"/><rect x="10" y="2" width="1" height="1" fill="#000000"/><rect x="11" y="2" width="1" height="1" fill="#404040"/><rect x="0" y="3" width="1" height="1" fill="#000000"/><rect x="1" y="3" width="2" height="1" fill="#ffff00"/><rect x="3" y="3" width="4" height="1" fill="#ff0000"/><rect x="7" y="3" width="1" height="1" fill="#00ffff"/><rect x="8" y="3" width="1" height="1" fill="#ff00ff"/><rect x="9" y="3" width="1" height="1" fill="#00ff00"/><rect x="10" y="3" width="1" height="1" fill="#000000"/><rect x="11" y="3" width="1" height="1" fill="#404040"/><rect x="0" y="4" width="1" height="1" fill="#000000"/><rect x="1" y="4" width="5" height="1" fill="#ff0000"/><rect x="6" y="4" width="2" height="1" fill="#00ffff"/><rect x="8" y="4" width="1" height="1" fill="#ff00ff"/><rect x="9" y="4" width="1" height="1" fill="#00ff00"/><rect x="10" y="4" width="1" height="1" fill="#000000"/><rect x="11" y="4" width="1" height="1" fill="#404040"/><rect x="0" y="5" width="1" height="1" fill="#000000"/><rect x="1" y="5" width="4" height="1" fill="#ff0000"/><rect x="5" y="5" width="3" height="1" fill="#00ffff"/><rect x="8" y="5" width="1" height="1" fill="#ff00ff"/><rect x="9" y="5" width="1" height="1" fill="#00ff00"/><rect x="10" y="5" width="1" height="1" fill="#000000"/><rect x="11" y="5" width="1" height="1" fill="#404040"/><rect x="0" y="6" width="1" height="1" fill="#000000"/><rect x="1" y="6" width="3" height="1" fill="#ff0000"/><rect x="4" y="6" width="3" height="1" fill="#00ffff"/><rect x="7" y="6" width="2" height="1" fill="#ff00ff"/><rect x="9" y="6" width="1" height="1" fill="#00ff00"/><rect x="10" y="6" width="1" height="1" fill="#000000"/><rect x="11" y="6" width="1" height="1" fill="#404040"/><rect x="0" y="7" width="1" height="1" fill="#000000"/><rect x="1" y="7" width="5" height="1" fill="#00ffff"/><rect x="6" y="7" width="3" height="1" fill="#ff00ff"/><rect x="9" y="7" width="1" height="1" fill="#00ff00"/><rect x="10" y="7" width="1" height="1" fill="#000000"/><rect x="11" y="7" width="1" height="1" fill="#404040"/><rect x="0" y="8" width="1" height="1" fill="#000000"/><rect x="1" y="8" width="7" height="1" fill="#ff00ff"/><rect x="8" y="8" width="3" height="1" fill="#ffffff"/><rect x="0" y="9" width="1" height="1" fill="#000000"/><rect x="1" y="9" width="7" height="1" fill="#00ff00"/><rect x="8" y="9" width="1" height="1" fill="#ffffff"/><rect x="0" y="10" width="8" height="1" fill="#000000"/><rect x="8" y="10" width="1" height="1" fill="#ffffff"/><rect x="2" y="11" width="6" height="1" fill="#808080"/></svg>
<svg style="left:63px;top:210px" width="7" height="7" viewBox="0 0 7 7" shape-rendering="crispEdges"><rect x="0" y="0" width="7" height="1" fill="#0000ff"/><rect x="0" y="1" width="1" height="1" fill="#0000ff"/><rect x="1" y="1" width="2" height="1" fill="#ffffff"/><rect x="3" y="1" width="1" height="1" fill="#0000ff"/><rect x="4" y="1" width="2" height="1" fill="#ffffff"/><rect x="6" y="1" width="1" height="1" fill="#0000ff"/><rect x="0" y="2" width="1" height="1" fill="#0000ff"/><rect x="1" y="2" width="2" height="1" fill="#ffffff"/><rect x="3" y="2" width="1" height="1" fill="#0000ff"/><rect x="4" y="2" width="2" height="1" fill="#ffffff"/><rect x="6" y="2" width="1" height="1" fill="#0000ff"/><rect x="0" y="3" width="7" height="1" fill="#0000ff"/><rect x="0" y="4" width="1" height="1" fill="#0000ff"/><rect x="1" y="4" width="2" height="1" fill="#ffffff"/><rect x="3" y="4" width="1" height="1" fill="#0000ff"/><rect x="4" y="4" width="2" height="1" fill="#ffffff"/><rect x="6" y="4" width="1" height="1" fill="#0000ff"/><rect x="0" y="5" width="1" height="1" fill="#0000ff"/><rect x="1" y="5" width="2" height="1" fill="#ffffff"/><rect x="3" y="5" width="1" height="1" fill="#0000ff"/><rect x="4" y="5" width="2" height="1" fill="#ffffff"/><rect x="6" y="5" width="1" height="1" fill="#0000ff"/><rect x="0" y="6" width="7" height="1" fill="#0000ff"/></svg>
<svg style="left:14px;top:519px" width="14" height="16" viewBox="0 0 14 16" shape-rendering="crispEdges"><rect x="1" y="0" width="11" height="1" fill="#000000"/><rect x="0" y="1" width="1" height="1" fill="#000000"/><rect x="1" y="1" width="3" height="1" fill="#ffffff"/><rect x="4" y="1" width="1" height="1" fill="#ffff00"/><rect x="5" y="1" width="3" height="1" fill="#ffffff"/><rect x="8" y="1" width="1" height="1" fill="#ffff00"/><rect x="9" y="1" width="3" height="1" fill="#ffffff"/><rect x="12" y="1" width="1" height="1" fill="#000000"/><rect x="0" y="2" width="1" height="1" fill="#000000"/><rect x="1" y="2" width="1" height="1" fill="#ffffff"/><rect x="2" y="2" width="1" height="1" fill="#ffff00"/><rect x="3" y="2" width="3" height="1" fill="#ffffff"/><rect x="6" y="2" width="1" height="1" fill="#ffff00"/><rect x="7" y="2" width="3" height="1" fill="#ffffff"/><rect x="10" y="2" width="1" height="1" fill="#ffff00"/><rect x="11" y="2" width="1" height="1" fill="#ffffff"/><rect x="12" y="2" width="1" height="1" fill="#000000"/><rect x="13" y="2" width="1" height="1" fill="#606060"/><rect x="0" y="3" width="1" height="1" fill="#000000"/><rect x="1" y="3" width="3" height="1" fill="#ffffff"/><rect x="4" y="3" width="1" height="1" fill="#ffff00"/><rect x="5" y="3" width="4" height="1" fill="#000080"/><rect x="9" y="3" width="3" height="1" fill="#ffffff"/><rect x="12" y="3" width="1" height="1" fill="#000000"/><rect x="13" y="3" width="1" height="1" fill="#606060"/><rect x="0" y="4" width="1" height="1" fill="#000000"/><rect x="1" y="4" width="1" height="1" fill="#ffffff"/><rect x="2" y="4" width="1" height="1" fill="#ffff00"/><rect x="3" y="4" width="1" height="1" fill="#ffffff"/><rect x="4" y="4" width="2" height="1" fill="#000080"/><rect x="6" y="4" width="2" height="1" fill="#ffffff"/><rect x="8" y="4" width="2" height="1" fill="#000080"/><rect x="10" y="4" width="1" height="1" fill="#ffff00"/><rect x="11" y="4" width="1" height="1" fill="#ffffff"/><rect x="12" y="4" width="1" height="1" fill="#000000"/><rect x="13" y="4" width="1" height="1" fill="#606060"/><rect x="0" y="5" width="1" height="1" fill="#000000"/><rect x="1" y="5" width="3" height="1" fill="#ffffff"/><rect x="4" y="5" width="2" height="1" fill="#000080"/><rect x="6" y="5" width="2" height="1" fill="#ffffff"/><rect x="8" y="5" width="2" height="1" fill="#000080"/><rect x="10" y="5" width="2" height="1" fill="#ffffff"/><rect x="12" y="5" width="1" height="1" fill="#000000"/><rect x="13" y="5" width="1" height="1" fill="#606060"/><rect x="0" y="6" width="1" height="1" fill="#000000"/><rect x="1" y="6" width="1" height="1" fill="#ffffff"/><rect x="2" y="6" width="1" height="1" fill="#ffff00"/><rect x="3" y="6" width="3" height="1" fill="#ffffff"/><rect x="6" y="6" width="1" height="1" fill="#ffff00"/><rect x="7" y="6" width="2" height="1" fill="#000080"/><rect x="9" y="6" width="1" height="1" fill="#ffffff"/><rect x="10" y="6" width="1" height="1" fill="#ffff00"/><rect x="11" y="6" width="1" height="1" fill="#ffffff"/><rect x="12" y="6" width="1" height="1" fill="#000000"/><rect x="13" y="6" width="1" height="1" fill="#606060"/><rect x="0" y="7" width="1" height="1" fill="#000000"/><rect x="1" y="7" width="3" height="1" fill="#ffffff"/><rect x="4" y="7" width="1" height="1" fill="#ffff00"/><rect x="5" y="7" width="1" height="1" fill="#ffffff"/><rect x="6" y="7" width="2" height="1" fill="#000080"/><rect x="8" y="7" width="1" height="1" fill="#ffff00"/><rect x="9" y="7" width="3" height="1" fill="#ffffff"/><rect x="12" y="7" width="1" height="1" fill="#000000"/><rect x="13" y="7" width="1" height="1" fill="#606060"/><rect x="0" y="8" width="1" height="1" fill="#000000"/><rect x="1" y="8" width="1" height="1" fill="#ffffff"/><rect x="2" y="8" width="1" height="1" fill="#ffff00"/><rect x="3" y="8" width="3" height="1" fill="#ffffff"/><rect x="6" y="8" width="1" height="1" fill="#000080"/><rect x="7" y="8" width="3" height="1" fill="#ffffff"/><rect x="10" y="8" width="1" height="1" fill="#ffff00"/><rect x="11" y="8" width="1" height="1" fill="#ffffff"/><rect x="12" y="8" width="1" height="1" fill="#000000"/><rect x="13" y="8" width="1" height="1" fill="#606060"/><rect x="0" y="9" width="1" height="1" fill="#000000"/><rect x="1" y="9" width="3" height="1" fill="#ffffff"/><rect x="4" y="9" width="1" height="1" fill="#ffff00"/><rect x="5" y="9" width="3" height="1" fill="#ffffff"/><rect x="8" y="9" width="1" height="1" fill="#ffff00"/><rect x="9" y="9" width="3" height="1" fill="#ffffff"/><rect x="12" y="9" width="1" height="1" fill="#000000"/><rect x="13" y="9" width="1" height="1" fill="#606060"/><rect x="0" y="10" width="1" height="1" fill="#000000"/><rect x="1" y="10" width="1" height="1" fill="#ffffff"/><rect x="2" y="10" width="1" height="1" fill="#ffff00"/><rect x="3" y="10" width="3" height="1" fill="#ffffff"/><rect x="6" y="10" width="2" height="1" fill="#000080"/><rect x="8" y="10" width="2" height="1" fill="#ffffff"/><rect x="10" y="10" width="1" height="1" fill="#ffff00"/><rect x="11" y="10" width="1" height="1" fill="#ffffff"/><rect x="12" y="10" width="1" height="1" fill="#000000"/><rect x="13" y="10" width="1" height="1" fill="#606060"/><rect x="0" y="11" width="1" height="1" fill="#000000"/><rect x="1" y="11" width="3" height="1" fill="#ffffff"/><rect x="4" y="11" width="1" height="1" fill="#ffff00"/><rect x="5" y="11" width="3" height="1" fill="#ffffff"/><rect x="8" y="11" width="1" height="1" fill="#ffff00"/><rect x="9" y="11" width="3" height="1" fill="#ffffff"/><rect x="12" y="11" width="1" height="1" fill="#000000"/><rect x="13" y="11" width="1" height="1" fill="#606060"/><rect x="1" y="12" width="7" height="1" fill="#000000"/><rect x="8" y="12" width="1" height="1" fill="#ffffff"/><rect x="9" y="12" width="1" height="1" fill="#ffff00"/><rect x="10" y="12" width="3" height="1" fill="#000000"/><rect x="13" y="12" width="1" height="1" fill="#606060"/><rect x="2" y="13" width="6" height="1" fill="#606060"/><rect x="8" y="13" width="1" height="1" fill="#000000"/><rect x="9" y="13" width="1" height="1" fill="#ffff00"/><rect x="10" y="13" width="1" height="1" fill="#000000"/><rect x="11" y="13" width="2" height="1" fill="#606060"/><rect x="9" y="14" width="2" height="1" fill="#000000"/><rect x="11" y="14" width="1" height="1" fill="#606060"/><rect x="10" y="15" width="1" height="1" fill="#000000"/><rect x="11" y="15" width="1" height="1" fill="#606060"/></svg>
<div class="gb" style="left:211px;top:43px;width:707px;height:105px"></div>
<div class="gb" style="left:211px;top:176px;width:707px;height:105px"></div>
<div class="gb" style="left:211px;top:329px;width:353px;height:126px"></div>
<div class="gb" style="left:564px;top:329px;width:354px;height:126px"></div>
<div class="gb" style="left:211px;top:463px;width:707px;height:40px"></div>
<svg class="rad" style="left:221px;top:56px" viewBox="0 0 13 13"><circle cx="6.5" cy="6.5" r="6" fill="#fff" stroke="#333" stroke-width="1"/><circle cx="6.5" cy="6.5" r="3.2" fill="#333"/></svg>
<div class="cb " style="left:292px;top:73px;width:270px;height:25px"></div>
<svg style="left:548px;top:81.5px" width="10" height="8" viewBox="0 0 10 8"><path d="M1 2 L5 6 L9 2" stroke="#404040" stroke-width="1.05" fill="none"/></svg>
<div class="btn " style="left:566px;top:74px;width:55px;height:23px"></div>
<svg class="rad" style="left:221px;top:101px" viewBox="0 0 13 13"><circle cx="6.5" cy="6.5" r="6" fill="#fff" stroke="#333" stroke-width="1"/></svg>
<div class="cb dis" style="left:280px;top:118px;width:154px;height:23px"><i style="left:2px;top:2px;width:131px;height:17px"></i></div>
<svg style="left:420px;top:125.5px" width="10" height="8" viewBox="0 0 10 8"><path d="M1 2 L5 6 L9 2" stroke="#a6a6a6" stroke-width="1.05" fill="none"/></svg>
<svg class="rad" style="left:221px;top:189px" viewBox="0 0 13 13"><circle cx="6.5" cy="6.5" r="6" fill="#fff" stroke="#333" stroke-width="1"/><circle cx="6.5" cy="6.5" r="3.2" fill="#333"/></svg>
<div class="cb " style="left:292px;top:206px;width:270px;height:25px"></div>
<svg style="left:548px;top:214.5px" width="10" height="8" viewBox="0 0 10 8"><path d="M1 2 L5 6 L9 2" stroke="#404040" stroke-width="1.05" fill="none"/></svg>
<div class="btn " style="left:566px;top:207px;width:55px;height:23px"></div>
<svg class="rad" style="left:221px;top:234px" viewBox="0 0 13 13"><circle cx="6.5" cy="6.5" r="6" fill="#fff" stroke="#333" stroke-width="1"/></svg>
<div class="cb dis" style="left:280px;top:251px;width:154px;height:23px"><i style="left:2px;top:2px;width:131px;height:17px"></i></div>
<svg style="left:420px;top:258.5px" width="10" height="8" viewBox="0 0 10 8"><path d="M1 2 L5 6 L9 2" stroke="#a6a6a6" stroke-width="1.05" fill="none"/></svg>
<div class="cb " style="left:274px;top:339px;width:132px;height:23px"></div>
<svg style="left:392px;top:346.5px" width="10" height="8" viewBox="0 0 10 8"><path d="M1 2 L5 6 L9 2" stroke="#404040" stroke-width="1.05" fill="none"/></svg>
<div class="tb " style="left:274px;top:382px;width:70px;height:22px"></div>
<div class="tb " style="left:274px;top:404px;width:70px;height:22px"></div>
<div class="tb " style="left:274px;top:426px;width:70px;height:22px"></div>
<div class="cb " style="left:627px;top:339px;width:132px;height:23px"></div>
<svg style="left:745px;top:346.5px" width="10" height="8" viewBox="0 0 10 8"><path d="M1 2 L5 6 L9 2" stroke="#404040" stroke-width="1.05" fill="none"/></svg>
<div class="tb " style="left:627px;top:382px;width:70px;height:22px"></div>
<div class="tb " style="left:627px;top:404px;width:70px;height:22px"></div>
<div class="tb " style="left:627px;top:426px;width:70px;height:22px"></div>
<div class="tb f" style="left:627px;top:404px;width:70px;height:22px"></div>
<div class="cb g" style="left:262px;top:473px;width:132px;height:23px"></div>
<svg style="left:380px;top:480.5px" width="10" height="8" viewBox="0 0 10 8"><path d="M1 2 L5 6 L9 2" stroke="#404040" stroke-width="1.05" fill="none"/></svg>
<div class="cb gd" style="left:445px;top:473px;width:132px;height:23px"></div>
<svg style="left:563px;top:480.5px" width="10" height="8" viewBox="0 0 10 8"><path d="M1 2 L5 6 L9 2" stroke="#a6a6a6" stroke-width="1.05" fill="none"/></svg>
<div class="cb dis" style="left:635px;top:473px;width:88px;height:23px"><i style="left:2px;top:2px;width:65px;height:17px"></i></div>
<svg style="left:709px;top:480.5px" width="10" height="8" viewBox="0 0 10 8"><path d="M1 2 L5 6 L9 2" stroke="#a6a6a6" stroke-width="1.05" fill="none"/></svg>
<div class="btn def" style="left:737px;top:515px;width:86px;height:24px"></div>
<div class="btn " style="left:831px;top:515px;width:86px;height:24px"></div>
<span class="t w" style="left:3.5px;top:6px;letter-spacing:-0.071px">Isis Mapfile Generation</span>
<span class="t" style="left:36.8px;top:40px;letter-spacing:0.165px">Macro Definition</span>
<span class="t w" style="left:55.8px;top:58px;letter-spacing:-0.137px">Database (mandatory)</span>
<span class="t" style="left:55.8px;top:76px;letter-spacing:-0.054px">Record (mandatory)</span>
<span class="t" style="left:55.8px;top:94px;letter-spacing:0.068px">Horizon (mandatory)</span>
<span class="t" style="left:56.2px;top:112px;letter-spacing:-0.091px">Standard Mapfile</span>
<span class="t" style="left:75.6px;top:130px;letter-spacing:-0.119px">Horizon Criteria</span>
<span class="t" style="left:75.6px;top:148px;letter-spacing:-0.162px">Mapfile Parameters</span>
<span class="t" style="left:56.4px;top:166px;letter-spacing:0.056px">Composite Mapfile</span>
<span class="t" style="left:75.2px;top:184px;letter-spacing:-0.163px">Variable Selection</span>
<span class="t" style="left:75.6px;top:202px;letter-spacing:-0.185px">Composite Parameters</span>
<span class="t gl" style="left:218.7px;top:37px;letter-spacing:-0.230px">Database 1... ( Mandatory )</span>
<span class="t" style="left:236.6px;top:56px;letter-spacing:-0.536px">ISIS file</span>
<span class="t" style="left:239.7px;top:77px;letter-spacing:-0.312px">Filename</span>
<span class="t" style="left:298.6px;top:77px;letter-spacing:0.031px">dummy_dipped.dhd.isis</span>
<span class="t" style="left:570.0px;top:79px;letter-spacing:-0.398px">Browse...</span>
<span class="t" style="left:237.8px;top:101px;letter-spacing:-0.604px">ODBC Link</span>
<span class="t d" style="left:239.8px;top:121px;letter-spacing:-0.437px">Design</span>
<span class="t gl" style="left:218.7px;top:170px;letter-spacing:-0.177px">Database 2... ( Optional Database for Composite )</span>
<span class="t" style="left:236.6px;top:189px;letter-spacing:-0.536px">ISIS file</span>
<span class="t" style="left:239.7px;top:210px;letter-spacing:-0.312px">Filename</span>
<span class="t" style="left:570.0px;top:212px;letter-spacing:-0.398px">Browse...</span>
<span class="t" style="left:237.8px;top:234px;letter-spacing:-0.604px">ODBC Link</span>
<span class="t d" style="left:239.8px;top:254px;letter-spacing:-0.437px">Design</span>
<span class="t" style="left:212.0px;top:304px;letter-spacing:-0.118px">These options will restrict which holes are loaded from the databases selected above.</span>
<span class="t gl" style="left:217.5px;top:323px;letter-spacing:-0.018px">Include Holes</span>
<span class="t" style="left:221.3px;top:342px;letter-spacing:-0.328px">by File</span>
<span class="t" style="left:221.3px;top:385px;letter-spacing:-0.110px">by Name</span>
<span class="t gl" style="left:571.5px;top:323px;letter-spacing:-0.268px">Exclude Holes</span>
<span class="t" style="left:574.3px;top:342px;letter-spacing:-0.328px">by File</span>
<span class="t" style="left:574.3px;top:385px;letter-spacing:-0.110px">by Name</span>
<span class="t gl" style="left:218.0px;top:457px;letter-spacing:0.280px">Limit polygon</span>
<span class="t" style="left:221.0px;top:476px;letter-spacing:-0.377px">Design</span>
<span class="t d" style="left:412.5px;top:476px;letter-spacing:-0.734px">Layer</span>
<span class="t d" style="left:596.0px;top:476px;letter-spacing:-0.271px">Object</span>
<span class="t d" style="left:641.0px;top:476px;letter-spacing:0.000px">*</span>
<span class="t" style="left:772.0px;top:520px;letter-spacing:-1.340px">OK</span>
<span class="t" style="left:856.0px;top:520px;letter-spacing:-0.139px">Cancel</span>
</div>
</body></html>
